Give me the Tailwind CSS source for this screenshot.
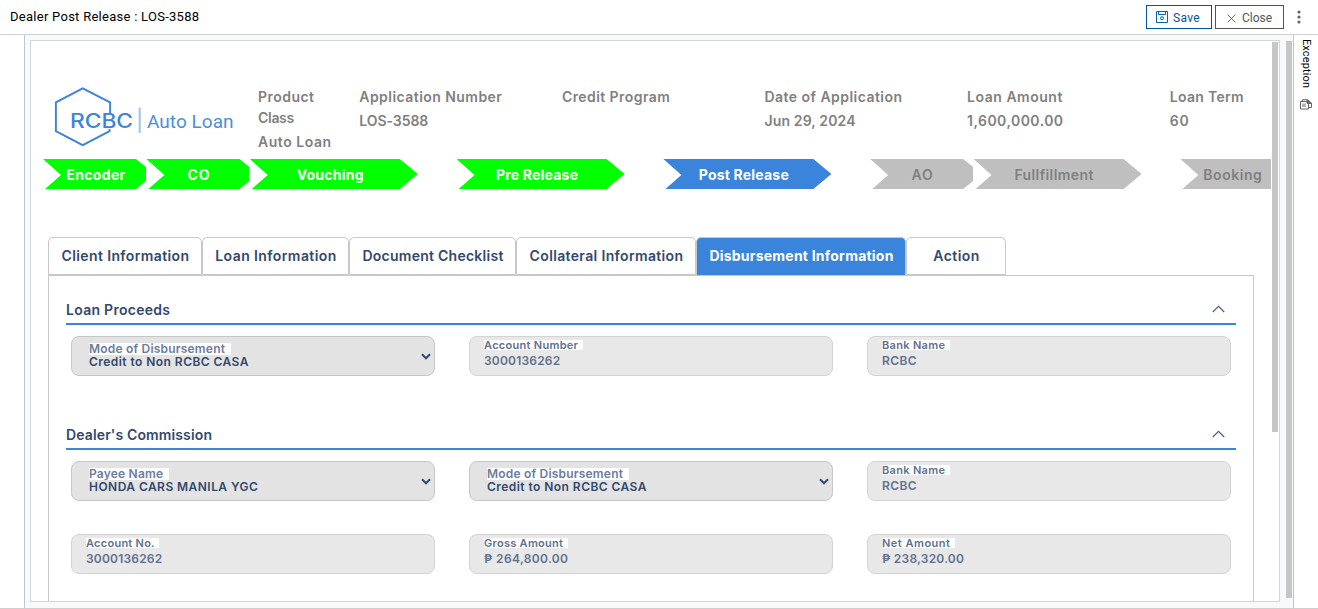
<!DOCTYPE html>
<html lang="en">
<head>
<meta charset="utf-8">
<title>Dealer Post Release : LOS-3588</title>
<script src="https://cdn.jsdelivr.net/npm/@tailwindcss/browser@4"></script>
</head>
<body class="w-[1318px] h-[609px] overflow-hidden bg-white flex flex-col font-[Inter,sans-serif] whitespace-nowrap">

<header class="h-[35px] shrink-0 border-b border-[#cfcfcf] flex items-center pl-[10px] pr-[17px] font-[Roboto,sans-serif]">
  <h1 class="text-[13px] leading-[16px] tracking-[0.27px] text-black">Dealer Post Release : LOS-3588</h1>
  <button class="ml-auto w-[66px] h-[24px] border border-[#00569d] text-[#00569d] flex items-center pl-[9px] gap-[5px] text-[12px] tracking-[0.3px]">
    <svg class="w-[12px] h-[12px]" viewBox="0 0 12 12" fill="none" stroke="#0068b5"><path d="M.5.5h11v11H.5zM2.5.5v3h7v-3"/><circle cx="6" cy="7.2" r="1.5"/></svg>
    <span class="pt-[2px]">Save</span>
  </button>
  <button class="ml-[3px] w-[69px] h-[24px] border border-[#555] text-[#555] flex items-center pl-[11px] gap-[6px] text-[12px]">
    <svg class="w-[9px] h-[9px] mt-[2px]" viewBox="0 0 9 9" fill="none" stroke="#666"><path d="M.7.7l7.6 7.6M8.3.7L.7 8.3"/></svg>
    <span class="pt-[2px]">Close</span>
  </button>
  <svg class="ml-[13px] w-[4px] h-[14px]" viewBox="0 0 4 14" fill="#666"><circle cx="2" cy="2" r="1.6"/><circle cx="2" cy="7" r="1.6"/><circle cx="2" cy="12" r="1.6"/></svg>
</header>

<div class="h-[574px] flex border-b border-[#cfcfcf]">
  <div class="w-[24px] shrink-0"></div>

  <div class="w-[1270px] shrink-0 border-x border-[#c4c4c4] bg-[#f8f9fb] flex pt-[5px] pl-[5px]">
    <main class="w-[1250px] h-[562px] border border-[#d3d5d7] bg-white flex overflow-hidden">
      <div class="w-[1241px] shrink-0 overflow-hidden">

        <!-- Application summary -->
        <section class="h-[118px] flex pt-[46px] pl-[23px]">
          <svg class="w-[204px] h-[60px] shrink-0" viewBox="54 87 204 60" fill="none">
            <path d="M110.1 114.500V102.300L82.700 88.300 55.900 102.300V131.200L82.700 145.200 109.600 131.200V129" stroke="#3a84dc" stroke-width="1.9"/>
            <text x="70" y="127.700" textLength="63" lengthAdjust="spacingAndGlyphs" font-family="Inter" font-size="19.500" font-weight="500" fill="#3a84dc">RCBC</text>
            <path d="M139.700 107.500V133" stroke="#9cc2ee" stroke-width="2"/>
            <text x="147" y="127.700" textLength="86.500" lengthAdjust="spacing" font-family="Roboto" font-size="19" fill="#4a8fdd">Auto Loan</text>
          </svg>
          <dl class="flex -mt-px text-[14px] font-semibold text-[#808080] leading-[21px]">
            <div class="w-[101.300px]"><dt><span class="tracking-[0.46px]">Product</span><br><span class="tracking-[-0.3px]">Class</span></dt><dd class="mt-[3px] tracking-[0.53px]">Auto Loan</dd></div>
            <div class="w-[202.600px]"><dt class="tracking-[0.45px]">Application Number</dt><dd class="mt-[3px] tracking-[-0.06px]">LOS-3588</dd></div>
            <div class="w-[202.600px]"><dt class="tracking-[0.43px]">Credit Program</dt></div>
            <div class="w-[202.600px]"><dt class="tracking-[0.46px]">Date of Application</dt><dd class="mt-[3px] tracking-[0.13px]">Jun 29, 2024</dd></div>
            <div class="w-[202.600px]"><dt class="tracking-[0.52px]">Loan Amount</dt><dd class="mt-[3px] tracking-[0.46px]">1,600,000.00</dd></div>
            <div class="w-[90px]"><dt class="tracking-[0.32px]">Loan Term</dt><dd class="mt-[3px] tracking-[0.8px]">60</dd></div>
          </dl>
        </section>

        <!-- Workflow stages -->
        <ol class="flex h-[30px] w-[1228px] ml-[12px] overflow-hidden text-[14px] leading-[32px] font-bold text-white text-center">
          <li class="w-[103.400px] shrink-0 flex"><div class="w-[103px] h-[30px] bg-[#00ff00] pl-[3px] tracking-[0.35px] [clip-path:polygon(0_0,93px_0,103px_8px,103px_22px,93px_30px,2px_30px,18px_16px)]">Encoder</div></li>
          <li class="w-[103.400px] shrink-0 flex"><div class="w-[103px] h-[30px] bg-[#00ff00] pl-[2px] tracking-[0.8px] [clip-path:polygon(0_0,93px_0,103px_8px,103px_22px,93px_30px,2px_30px,18px_16px)]">CO</div></li>
          <li class="w-[206.800px] shrink-0 flex"><div class="w-[168px] h-[30px] bg-[#00ff00] pr-[7px] tracking-[0.25px] [clip-path:polygon(0_0,150px_0,168px_15px,150px_30px,2px_30px,18px_16px)]">Vouching</div></li>
          <li class="w-[206.800px] shrink-0 flex"><div class="w-[168px] h-[30px] bg-[#00ff00] pr-[7px] tracking-[0.2px] [clip-path:polygon(0_0,150px_0,168px_15px,150px_30px,2px_30px,18px_16px)]">Pre Release</div></li>
          <li class="w-[206.800px] shrink-0 flex"><div class="w-[168px] h-[30px] bg-[#3a84dc] pr-[7px] tracking-[0.2px] [clip-path:polygon(0_0,150px_0,168px_15px,150px_30px,2px_30px,18px_16px)]">Post Release</div></li>
          <li class="w-[103.400px] shrink-0 flex"><div class="w-[103px] h-[30px] bg-[#bfbfbf] text-[#808080] font-semibold pl-[2px] tracking-[1px] [clip-path:polygon(0_0,93px_0,103px_8px,103px_22px,93px_30px,2px_30px,18px_16px)]">AO</div></li>
          <li class="w-[206.800px] shrink-0 flex"><div class="w-[168px] h-[30px] bg-[#bfbfbf] text-[#808080] font-semibold pr-[7px] tracking-[0.4px] [clip-path:polygon(0_0,150px_0,168px_15px,150px_30px,2px_30px,18px_16px)]">Fullfillment</div></li>
          <li class="w-[103.400px] shrink-0 flex"><div class="w-[103px] h-[30px] bg-[#bfbfbf] text-[#808080] font-semibold pl-[2px] tracking-[0.55px] [clip-path:polygon(0_0,103px_0,103px_30px,2px_30px,18px_16px)]">Booking</div></li>
        </ol>

        <!-- Tabs -->
        <nav class="flex h-[38px] mt-[48px] ml-[17px] text-[14px] leading-[36px] font-semibold text-[#32486d] text-center">
          <div class="w-[154px] pl-px border border-[#c8c8c8] rounded-t-[5px] tracking-[0.38px]">Client Information</div>
          <div class="w-[147px] pl-px border border-[#c8c8c8] rounded-t-[5px] tracking-[0.41px]">Loan Information</div>
          <div class="w-[167px] pl-px border border-[#c8c8c8] rounded-t-[5px] tracking-[0.26px]">Document Checklist</div>
          <div class="w-[180px] pl-px border border-[#c8c8c8] rounded-t-[5px] tracking-[0.35px]">Collateral Information</div>
          <div class="w-[210px] pl-px border border-b-0 border-[#c8c8c8] rounded-t-[5px] bg-[#3a84dc] text-white font-bold tracking-[0.22px]">Disbursement Information</div>
          <div class="w-[100px] pl-px border border-[#c8c8c8] rounded-t-[5px] tracking-[0.43px]">Action</div>
        </nav>

        <div class="w-[1206px] h-[400px] ml-[17px] border border-[#c8c8c8] px-[17px] pt-[23px]">
          <section>
            <div class="h-[26px] border-b-2 border-[#3a84dc] flex items-start justify-between pr-[11px] text-[14px] leading-[22px] font-semibold text-[#32486d]">
              <h2 class="tracking-[0.28px]">Loan Proceeds</h2>
              <svg class="w-[13px] h-[8px] mt-[6px]" viewBox="0 0 13 8" fill="none" stroke="#4b5f80" stroke-width="1.200"><path d="M.8 7L6.500 1.300 12.200 7"/></svg>
            </div>
            <div class="grid grid-cols-3 gap-x-[34px] mt-[11px] mx-[5px] w-[1160px] text-[12px]">
              <div class="h-[40px] rounded-[8px] border border-[#c6c6c6] bg-[#e3e3e3] pl-[17px] pr-[3px] flex justify-between items-center text-[#32486d]">
                <div class="h-[26px]">
                  <div class="w-[142px] h-[12px] leading-[12px] bg-white font-semibold text-[#6b7d9b] tracking-[0.2px]">Mode of Disbursement</div>
                  <div class="leading-[13px] font-semibold tracking-[0.45px]">Credit to Non RCBC CASA</div>
                </div>
                <svg class="w-[10px] h-[7px]" viewBox="0 0 10 7" fill="none" stroke="currentColor" stroke-width="2"><path d="M1 1.300l4 4 4-4"/></svg>
              </div>
              <div class="h-[40px] rounded-[8px] border border-[#d3d3d3] bg-[#e8e8e8] pl-[14px] pt-[3px] text-[#61718f]">
                <div class="w-[99px] h-[10px] leading-[10px] bg-white text-[11px] font-semibold tracking-[0.29px]">Account Number</div>
                <div class="mt-[3px] leading-[15px] font-semibold tracking-[0.2px]">3000136262</div>
              </div>
              <div class="h-[40px] rounded-[8px] border border-[#d3d3d3] bg-[#e8e8e8] pl-[14px] pt-[3px] text-[#61718f]">
                <div class="w-[68px] h-[10px] leading-[10px] bg-white text-[11px] font-semibold tracking-[0.32px]">Bank Name</div>
                <div class="mt-[3px] leading-[15px] font-semibold tracking-[0.4px]">RCBC</div>
              </div>
            </div>
          </section>

          <section class="mt-[48px]">
            <div class="h-[26px] border-b-2 border-[#3a84dc] flex items-start justify-between pr-[11px] text-[14px] leading-[22px] font-semibold text-[#32486d]">
              <h2 class="tracking-[0.13px]">Dealer's Commission</h2>
              <svg class="w-[13px] h-[8px] mt-[6px]" viewBox="0 0 13 8" fill="none" stroke="#4b5f80" stroke-width="1.200"><path d="M.8 7L6.500 1.300 12.200 7"/></svg>
            </div>
            <div class="grid grid-cols-3 gap-x-[34px] gap-y-[33px] mt-[11px] mx-[5px] w-[1160px] text-[12px]">
              <div class="h-[40px] rounded-[8px] border border-[#c6c6c6] bg-[#e3e3e3] pl-[17px] pr-[3px] flex justify-between items-center text-[#32486d]">
                <div class="h-[26px]">
                  <div class="w-[80px] h-[12px] leading-[12px] bg-white font-semibold text-[#6b7d9b] tracking-[0.2px]">Payee Name</div>
                  <div class="leading-[13px] font-semibold tracking-[0.45px]">HONDA CARS MANILA YGC</div>
                </div>
                <svg class="w-[10px] h-[7px]" viewBox="0 0 10 7" fill="none" stroke="currentColor" stroke-width="2"><path d="M1 1.300l4 4 4-4"/></svg>
              </div>
              <div class="h-[40px] rounded-[8px] border border-[#c6c6c6] bg-[#e3e3e3] pl-[17px] pr-[3px] flex justify-between items-center text-[#32486d]">
                <div class="h-[26px]">
                  <div class="w-[142px] h-[12px] leading-[12px] bg-white font-semibold text-[#6b7d9b] tracking-[0.2px]">Mode of Disbursement</div>
                  <div class="leading-[13px] font-semibold tracking-[0.45px]">Credit to Non RCBC CASA</div>
                </div>
                <svg class="w-[10px] h-[7px]" viewBox="0 0 10 7" fill="none" stroke="currentColor" stroke-width="2"><path d="M1 1.300l4 4 4-4"/></svg>
              </div>
              <div class="h-[40px] rounded-[8px] border border-[#d3d3d3] bg-[#e8e8e8] pl-[14px] pt-[3px] text-[#61718f]">
                <div class="w-[68px] h-[10px] leading-[10px] bg-white text-[11px] font-semibold tracking-[0.32px]">Bank Name</div>
                <div class="mt-[3px] leading-[15px] font-semibold tracking-[0.4px]">RCBC</div>
              </div>
              <div class="h-[40px] rounded-[8px] border border-[#d3d3d3] bg-[#e8e8e8] pl-[14px] pt-[3px] text-[#61718f]">
                <div class="w-[73px] h-[10px] leading-[10px] bg-white text-[11px] font-semibold tracking-[0.26px]">Account No.</div>
                <div class="mt-[3px] leading-[15px] font-semibold tracking-[0.2px]">3000136262</div>
              </div>
              <div class="h-[40px] rounded-[8px] border border-[#d3d3d3] bg-[#e8e8e8] pl-[14px] pt-[3px] text-[#61718f]">
                <div class="w-[84px] h-[10px] leading-[10px] bg-white text-[11px] font-semibold tracking-[0.28px]">Gross Amount</div>
                <div class="mt-[3px] leading-[15px] font-semibold tracking-[0.35px]">₱ 264,800.00</div>
              </div>
              <div class="h-[40px] rounded-[8px] border border-[#d3d3d3] bg-[#e8e8e8] pl-[14px] pt-[3px] text-[#61718f]">
                <div class="w-[73px] h-[10px] leading-[10px] bg-white text-[11px] font-semibold tracking-[0.5px]">Net Amount</div>
                <div class="mt-[3px] leading-[15px] font-semibold tracking-[0.22px]">₱ 238,320.00</div>
              </div>
            </div>
          </section>
        </div>
      </div>
      <div class="w-[6px] h-[390px] mt-px bg-[#c6c6c6] shrink-0"></div>
    </main>
    <div class="w-[6px] h-[557px] ml-[6px] mt-px bg-[#c6c6c6]"></div>
  </div>

  <aside class="w-[24px] flex flex-col items-center pt-[4px]">
    <div class="h-[48px] w-[14px] leading-[14px] text-[11px] tracking-[0.12px] text-black font-[Roboto,sans-serif] [writing-mode:vertical-rl]">Exception</div>
    <svg class="w-[12px] h-[11px] mt-[12px]" viewBox="0 0 12 11" fill="none" stroke="#666"><path d="M.5 2.500h8v7.500h-8zM2.500 2.500V.7h5L11.500 4v4.500h-3M3 4.500V8M5 4.500V8"/><path d="M7 1v3.500h4L7.500 1z" fill="#666"/></svg>
  </aside>
</div>
</body>
</html>
